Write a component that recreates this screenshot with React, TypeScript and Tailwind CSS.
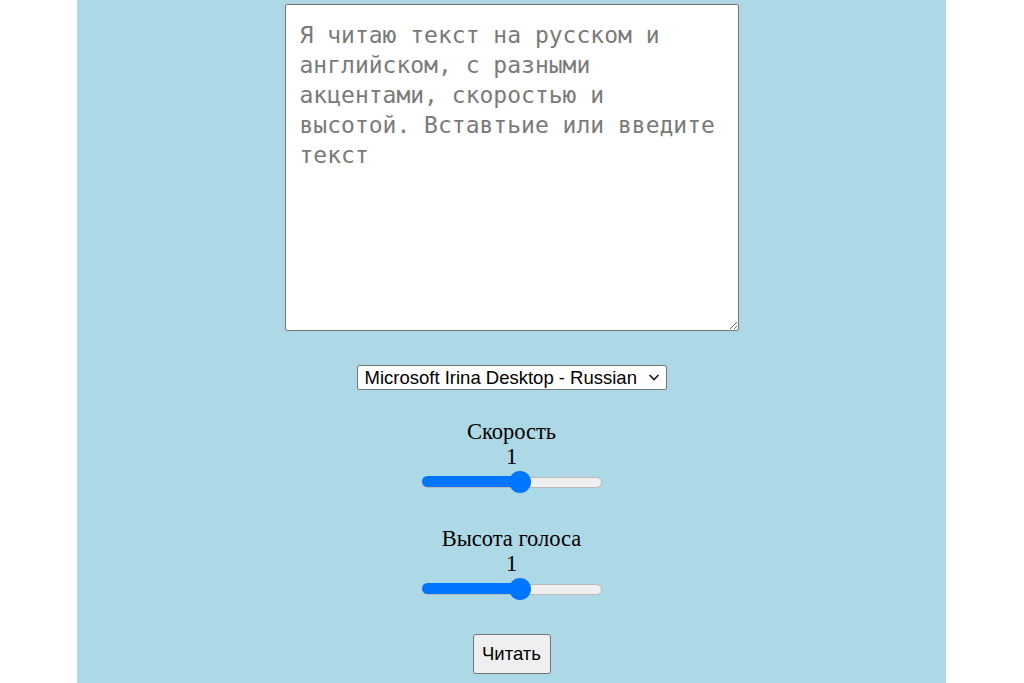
import React, { useState } from 'react'

type SliderProps = {
    label: string
    value: number
}

function Slider(props: SliderProps) {
    // thumb sits at about 55% of the track
    return (
        <div className="flex flex-col items-center">
            <span className="block h-[25px] leading-[21px] text-[22.5px] text-black">{props.label}</span>
            <span className="block h-[25px] leading-[21px] text-[22.5px] text-black">{props.value}</span>
            <div className="relative w-[180px] h-[22px] flex items-center">
                <div className="w-full h-[11px] rounded-full bg-[#efefef] border border-[#b8b8b8]"></div>
                <div className="absolute left-0 top-[5px] h-[11px] w-[100px] rounded-l-full bg-[#0075ff]"></div>
                <div className="absolute left-[87px] top-0 w-[22px] h-[22px] rounded-full bg-[#0075ff]"></div>
            </div>
        </div>
    )
}

export default function App() {
    const [text, setText] = useState('')

    return (
        <div className="min-h-screen w-full bg-white">
            <div
                className="w-[869px] min-h-screen ml-[77px] bg-[#add8e6] flex flex-col items-center pt-[4px] pb-[10px]"
                style={{ fontFamily: '"Liberation Serif", "Times New Roman", serif' }}
            >
                <textarea
                    value={text}
                    onChange={(event) => setText(event.target.value)}
                    placeholder="Я читаю текст на русском и английском, с разными акцентами, скоростью и высотой. Вставтьие или введите текст"
                    className="w-[454px] h-[327px] bg-white border border-[#767676] rounded-[2px] pl-[14px] pr-[14px] pt-[15px] text-[23px] leading-[30px] text-black placeholder:text-[#7a7a7a] outline-none resize"
                    style={{ fontFamily: '"DejaVu Sans Mono", monospace' }}
                ></textarea>

                <div className="relative mt-[34px]">
                    <select
                        className="appearance-none w-[310px] h-[25px] bg-white border border-[#767676] rounded-[2px] pl-[7px] pr-[24px] text-[18.5px] leading-[23px] text-black outline-none"
                        style={{ fontFamily: '"Liberation Sans", Arial, sans-serif' }}
                        defaultValue="irina"
                    >
                        <option value="irina">Microsoft Irina Desktop - Russian</option>
                    </select>
                    <svg
                        className="absolute right-[7px] top-[8px] pointer-events-none"
                        width="12"
                        height="9"
                        viewBox="0 0 12 9"
                        fill="none"
                    >
                        <path d="M1.5 2L6 6.5L10.5 2" stroke="#1a1a1a" strokeWidth="1.6" />
                    </svg>
                </div>

                <div className="mt-[30px]">
                    <Slider label="Скорость" value={1} />
                </div>
                <div className="mt-[35px]">
                    <Slider label="Высота голоса" value={1} />
                </div>

                <button
                    className="mt-[34px] w-[78px] h-[40px] bg-[#efefef] border border-[#767676] rounded-[3px] text-[18.5px] text-black"
                    style={{ fontFamily: '"Liberation Sans", Arial, sans-serif' }}
                >
                    Читать
                </button>
            </div>
        </div>
    )
}
